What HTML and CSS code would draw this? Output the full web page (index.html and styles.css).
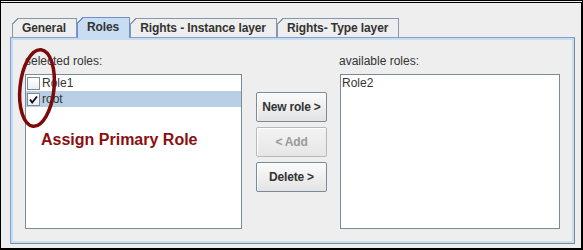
FILE: index.html
```html
<!DOCTYPE html>
<html lang="en">
<head>
    <meta charset="UTF-8">
    <title>Roles</title>
    <link rel="stylesheet" href="styles.css">
</head>
<body>
    <div class="window">
        <!-- tab strip -->
        <div class="tabs">
            <div class="tab">General</div>
            <div class="tab tab-active">Roles</div>
            <div class="tab">Rights - Instance layer</div>
            <div class="tab">Rights- Type layer</div>
        </div>

        <div class="tab-panel">
            <div class="roles-grid">
                <div class="field-label">selected roles:</div>
                <div></div>
                <div class="field-label field-label-right">available roles:</div>

                <ul class="role-list">
                    <li class="role-item">
                        <span class="check"></span>Role1
                    </li>
                    <li class="role-item is-selected">
                        <span class="check">
                            <svg width="11" height="11" viewBox="0 0 11 11">
                                <path d="M2 5.5 L4.2 8.5 L9 2.5" fill="none" stroke="#111" stroke-width="1.9"/>
                            </svg>
                        </span>root
                    </li>
                </ul>

                <div class="button-column">
                    <button class="btn">New role &gt;</button>
                    <button class="btn" disabled>&lt; Add</button>
                    <button class="btn">Delete &gt;</button>
                </div>

                <ul class="role-list role-list-right">
                    <li class="role-item">Role2</li>
                </ul>
            </div>
        </div>

        <!-- annotation drawn over the screenshot -->
        <svg class="callout-ring" width="46" height="90" viewBox="0 0 46 90">
            <ellipse cx="22" cy="43" rx="17" ry="38.5" fill="none" stroke="#7d0a0a" stroke-width="3.5" transform="rotate(6 22 43)"/>
        </svg>
        <div class="callout-text">Assign Primary Role</div>
    </div>
</body>
</html>
```

FILE: styles.css
```css
:root {
    --frame-bg: #eeeeee;
    --text: #333333;
    --line-grey: #7a8a99;
    --line-blue: #7f9fd6;
    --ocean-light: #c8ddf2;
    --selection: #b8cfe5;
    --callout: #8b0f0f;
}

* {
    box-sizing: border-box;
}

body {
    margin: 0;
    background: var(--frame-bg);
}

.window {
    position: relative;
    width: 583px;
    height: 250px;
    display: flex;
    flex-direction: column;
    padding: 14px 6px 4px 9px;
    background: var(--frame-bg);
    border: 1px solid #000;
    border-top: 3px double #000;
    border-right-width: 2px;
    border-bottom-width: 2px;
    font-family: "Liberation Sans", Arial, sans-serif;
    font-size: 12px;
    color: var(--text);
}

/* Tabs */
.tabs {
    display: flex;
    align-items: flex-end;
    height: 20px;
    padding-left: 2px;
    position: relative;
    z-index: 1;
}

.tab {
    position: relative;
    height: 19px;
    padding: 0 10px 0 9px;
    line-height: 18px;
    font-weight: bold;
    letter-spacing: -0.1px;
    background: var(--frame-bg);
    border: 1px solid #8797ab;
    border-bottom: none;
    white-space: nowrap;
}

/* slanted top-left corner of metal tabs */
.tab::before {
    content: "";
    position: absolute;
    left: -1px;
    top: -1px;
    width: 7px;
    height: 7px;
    background: linear-gradient(135deg, var(--frame-bg) 0 4px, #8797ab 4px 5.2px, transparent 5.2px);
}

.tab-active {
    height: 21px;
    margin-bottom: -1px;
    padding-bottom: 2px;
    background: var(--ocean-light);
    border-color: #6f8fcf;
}

.tab-active::before {
    background: linear-gradient(135deg, var(--frame-bg) 0 4px, #6f8fcf 4px 5.2px, transparent 5.2px);
}

.tab-panel {
    flex: 1;
    padding: 16px 14px 0 14px;
    border: 1px solid;
    border-color: var(--line-blue) var(--line-grey) var(--line-grey) var(--line-blue);
    box-shadow: inset 0 0 0 2px var(--ocean-light);
}

.roles-grid {
    display: grid;
    grid-template-columns: 217px auto 220px;
    row-gap: 6px;
}

.field-label {
    line-height: 14px;
}

.field-label-right {
    margin-left: -1px;
}

.role-list {
    margin: 0;
    padding: 0;
    list-style: none;
    height: 155px;
    background: #fff;
    border: 1px solid var(--line-grey);
}

.role-item {
    display: flex;
    align-items: center;
    height: 16px;
    padding-left: 1px;
    white-space: nowrap;
}

.role-item.is-selected {
    background: var(--selection);
}

.check {
    display: inline-flex;
    align-items: center;
    justify-content: center;
    width: 13px;
    height: 13px;
    margin-right: 2px;
    border: 1px solid var(--line-grey);
    background: linear-gradient(#ffffff, #e9eef4);
}

.button-column {
    display: flex;
    flex-direction: column;
    gap: 5px;
    padding: 18px 11px 0 14px;
}

.btn {
    width: 71px;
    height: 30px;
    padding: 0;
    font-family: inherit;
    font-size: 12px;
    font-weight: bold;
    letter-spacing: -0.2px;
    color: var(--text);
    background: linear-gradient(#fbfbfb, #e3e3e3);
    border: 1px solid var(--line-grey);
    border-radius: 2px;
    box-shadow: inset 1px 1px 0 #ffffff;
}

.btn:disabled {
    color: #9a9a9a;
    border-color: #b5b9be;
    background: linear-gradient(#f3f3f3, #e6e6e6);
}

/* Annotation overlay */
.callout-ring {
    position: absolute;
    left: 14px;
    top: 42px;
    pointer-events: none;
}

.callout-text {
    position: absolute;
    left: 40px;
    top: 128px;
    font-size: 16px;
    font-weight: bold;
    color: var(--callout);
    white-space: nowrap;
}
```
